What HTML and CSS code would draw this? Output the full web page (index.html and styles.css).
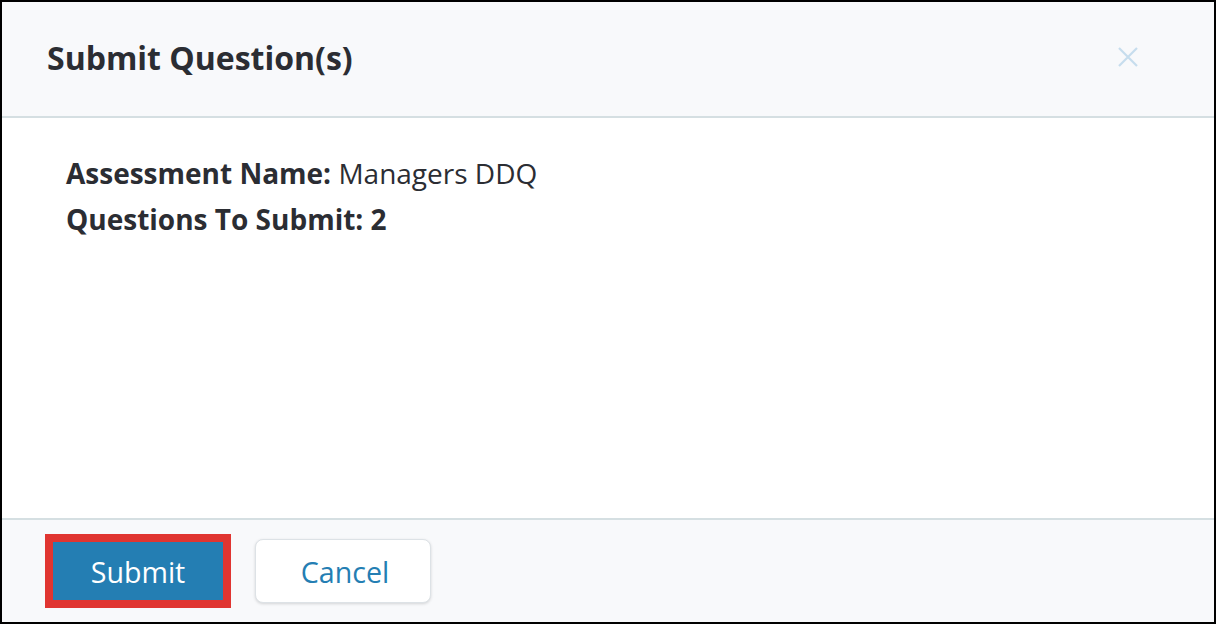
FILE: index.html
```html
<!DOCTYPE html>
<html>
<head>
<meta charset="utf-8">
<link rel="stylesheet" href="styles.css">
</head>
<body>
<div class="modal">
  <div class="modal-header">
    <h1 class="modal-title">Submit Question(s)</h1>
    <button class="close-btn" aria-label="Close">
      <svg width="20" height="20" viewBox="0 0 20 20"><path d="M1 1 L19 19 M19 1 L1 19" stroke="#c6dded" stroke-width="2.2" fill="none"/></svg>
    </button>
  </div>
  <div class="modal-body">
    <p class="info-line"><strong>Assessment Name:</strong> Managers DDQ</p>
    <p class="info-line"><strong>Questions To Submit: 2</strong></p>
  </div>
  <div class="modal-footer">
    <button class="btn btn-primary">Submit</button>
    <button class="btn btn-default">Cancel</button>
  </div>
</div>
</body>
</html>
```

FILE: styles.css
```css
* { box-sizing: border-box; }
html, body { margin: 0; padding: 0; }
body {
  width: 1216px;
  height: 624px;
  font-family: "Open Sans", "Liberation Sans", sans-serif;
  color: #2b2d33;
  background: #fff;
}
.modal {
  width: 1216px;
  height: 624px;
  border: 2px solid #000;
  display: flex;
  flex-direction: column;
  background: #fff;
}
.modal-header {
  height: 116px;
  flex: none;
  background: #f8f9fb;
  border-bottom: 2px solid #d5dfe2;
  display: flex;
  align-items: center;
  justify-content: space-between;
  padding: 0 76px 4px 45px;
}
.modal-title {
  margin: 0;
  font-size: 32px;
  font-weight: 700;
  color: #2b2d33;
}
.close-btn {
  border: 0;
  background: transparent;
  padding: 0;
  width: 20px;
  height: 20px;
  display: flex;
}
.modal-body {
  flex: 1;
  padding: 32px 64px;
}
.info-line {
  margin: 0;
  font-size: 28px;
  line-height: 46px;
}
.info-line strong { font-weight: 700; }
.modal-footer {
  height: 104px;
  flex: none;
  background: #f8f9fb;
  border-top: 2px solid #d5dfe2;
  display: flex;
  align-items: center;
  gap: 24px;
  padding: 0 43px;
}
.btn {
  font-family: "Open Sans", "Liberation Sans", sans-serif;
  font-size: 28.6px;
  font-weight: 500;
  cursor: pointer;
}
.btn-primary {
  width: 186px;
  height: 74px;
  background: #247eb3;
  color: #fff;
  border: 8px solid #e03531;
  padding: 0;
}
.btn-default {
  width: 176px;
  height: 64px;
  background: #fff;
  color: #247eb3;
  border: 1px solid #dde2e6;
  border-radius: 8px;
  box-shadow: 0 1px 3px rgba(0,0,0,0.15);
  padding: 0 0 0 4px;
}
```
